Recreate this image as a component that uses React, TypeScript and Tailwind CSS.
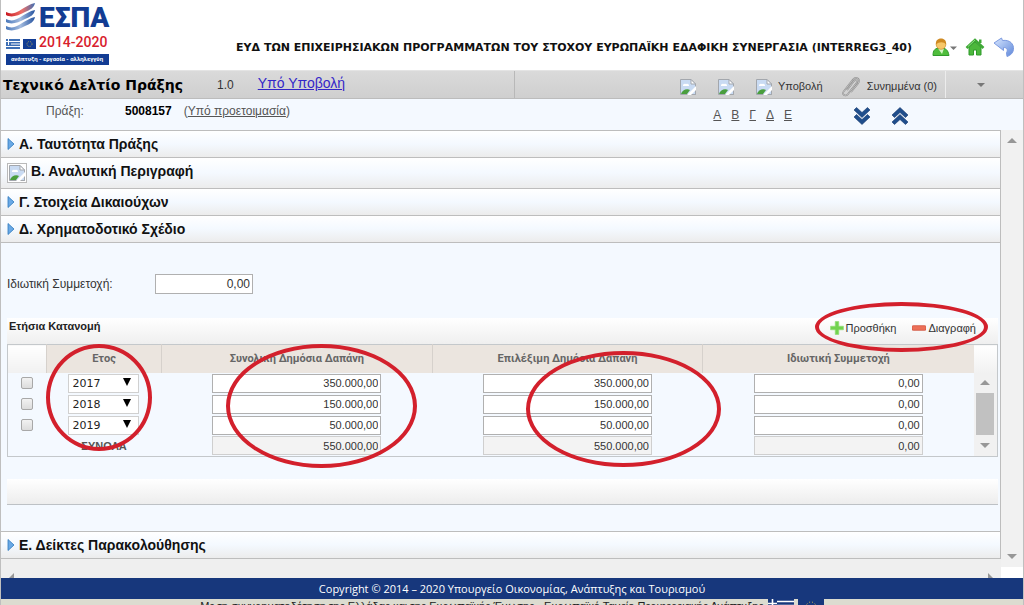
import React from "react";

const arial = "font-['Liberation_Sans',Arial,sans-serif]";

function Logo() {
  return (
    <svg width="106" height="66" viewBox="0 0 106 66" role="img" aria-label="ΕΣΠΑ 2014-2020" className="block shrink-0">
      <defs>
        <linearGradient id="wr" x1="0" x2="1"><stop offset="0" stopColor="#c81820" /><stop offset=".55" stopColor="#ee7068" /><stop offset="1" stopColor="#3f6fb4" /></linearGradient>
        <linearGradient id="wb" x1="0" x2="1"><stop offset="0" stopColor="#4a78bb" /><stop offset=".5" stopColor="#a4bcdf" /><stop offset="1" stopColor="#24529f" /></linearGradient>
      </defs>
      <path d="M1 12C5 14 9 14 14 11C20 7 25 4 30 3C29 8 25 10 20 12C13 16 6 18 1 15Z" fill="url(#wr)" />
      <path d="M1 19C5 21 9 21 14 18C20 14 25 11 30 10C29 15 25 17 20 19C13 23 6 25 1 22Z" fill="url(#wb)" />
      <path d="M1 26C5 28 9 28 14 25C20 21 25 18 30 17C29 22 25 24 20 26C13 30 6 32 1 29Z" fill="url(#wb)" />
      <text x="34" y="27" fontFamily="Roboto" fontWeight="900" fontSize="28" fill="#123c93">ΕΣΠΑ</text>
      <rect x="1" y="39" width="14" height="10" fill="#3f6fb4" />
      <path d="M6 41.500H15M6 44H15M1 46.500H15" stroke="#fff" />
      <path d="M3.500 39V45M1 41.500H6" stroke="#fff" />
      <rect x="18" y="39" width="13" height="10" fill="#123c93" />
      <circle cx="24.500" cy="44" r="2.500" fill="none" stroke="#b8ac5a" strokeWidth=".8" strokeDasharray="1 1" />
      <text x="34" y="47" fontFamily="Roboto" fontWeight="500" fontSize="14" fill="#d8202c">2014-2020</text>
      <rect x="1" y="54" width="103" height="11" fill="#123c93" />
      <text x="52" y="61" textAnchor="middle" fontFamily="Roboto" fontWeight="700" fontSize="6" fill="#fff">ανάπτυξη - εργασία - αλληλεγγύη</text>
    </svg>
  );
}

function BrokenImage({ boxed = false }: { boxed?: boolean }) {
  return (
    <svg width="20" height="20" viewBox="0 0 20 20" className="block shrink-0" aria-hidden="true">
      {boxed && <rect x=".5" y=".5" width="19" height="19" fill="#fff" stroke="#b9b9b9" />}
      <path d="M2.500 2.500H13L17.500 7V17.500H2.500Z" fill="#c9dbf3" stroke="#a3a7ad" />
      <path d="M13 2.500V7H17.500Z" fill="#fff" stroke="#a3a7ad" />
      <path d="M5 9a2 2 0 0 1 3-2a2 2 0 0 1 3 2Z" fill="#fff" />
      <path d="M3 17C4 13 9 11 12 13L9 17Z" fill="#4a9e3d" />
      <path d="M9 18L18 9V13L13 18Z" fill="#fff" />
      <path d="M14 17.500H17.500V14" fill="none" stroke="#a3a7ad" />
    </svg>
  );
}

function UserIcon() {
  return (
    <svg width="25" height="20" viewBox="0 0 25 20" className="block" aria-hidden="true">
      <path d="M1 18.500C1 13 3 11 8.500 11S16 13 17 18.500Z" fill="#4fbd3c" stroke="#2f9a2a" />
      <path d="M6 11.500L10 17L12 11.500Z" fill="#d3f5c4" />
      <circle cx="9" cy="7.500" r="4.800" fill="#f7c768" stroke="#c98a28" strokeWidth=".7" />
      <path d="M4 7.500C2.500 -.5 15.500 -.5 14 7.500C12 4.500 7 4.500 4 7.500Z" fill="#cf8a22" />
      <path d="M18 9.500H25L21.500 13Z" fill="#777" />
    </svg>
  );
}

function HomeIcon() {
  return (
    <svg width="20" height="18" viewBox="0 0 20 18" className="block" aria-hidden="true">
      <path d="M4 9V17H8.500V12H11.500V17H16V9L10 4Z" fill="#4cb83c" stroke="#2f9a2a" />
      <path d="M14 1.500H16.500V5H14Z" fill="#3fa836" />
      <path d="M1.500 10L10 2L18.500 10" fill="none" stroke="#3fa836" strokeWidth="2.600" />
      <path d="M3 8.500L10 2" stroke="#8be07f" strokeWidth="1" />
    </svg>
  );
}

function BackIcon() {
  return (
    <svg width="22" height="20" viewBox="0 0 22 20" className="block" aria-hidden="true">
      <defs><linearGradient id="bk" x1="0" y1="0" x2="1" y2="1"><stop offset="0" stopColor="#d7e6ff" /><stop offset="1" stopColor="#5f88da" /></linearGradient></defs>
      <path d="M1 6L8.500 1L9.500 3.500C17 2.500 21 7 20.500 12.500C20 16 17.500 18.500 14 19.500L13.500 16C15 13 14.500 10.500 10.500 10.500V13.500Z" fill="url(#bk)" stroke="#7d9be0" />
    </svg>
  );
}

function ClipIcon() {
  return (
    <svg width="20" height="22" viewBox="0 0 20 22" className="block" aria-hidden="true">
      <path d="M6 14L13 5C15 3 17 5 15.500 7L7 18C4 21.500 .500 18 3 15L12 3.500C15 0 20 3 17 7.500L10 16" fill="none" stroke="#8b8b8b" strokeWidth="1.600" />
      <path d="M6 14L13 5C15 3 17 5 15.500 7L7 18C4 21.500 .500 18 3 15L12 3.500C15 0 20 3 17 7.500L10 16" fill="none" stroke="#ddd" strokeWidth=".6" />
    </svg>
  );
}

function Chevrons({ up = false }: { up?: boolean }) {
  return (
    <svg width="18" height="20" viewBox="0 0 18 20" className={up ? "block rotate-180" : "block"} aria-hidden="true">
      <path d="M1 4L3.500 1.500L9 6.500L14.500 1.500L17 4L9 11.500ZM1 11L3.500 8.500L9 13.500L14.500 8.500L17 11L9 18.500Z" fill="#1f4e8c" stroke="#16386c" strokeWidth=".6" />
    </svg>
  );
}

function Tri({ up = false }: { up?: boolean }) {
  return (
    <svg width="10" height="5" viewBox="0 0 10 5" className={up ? "block rotate-180" : "block"} aria-hidden="true">
      <path d="M0 0H10L5 5Z" fill="#979797" />
    </svg>
  );
}

function Section({ title, broken = false }: { title: string; broken?: boolean }) {
  return (
    <button type="button" className={`flex w-full shrink-0 items-center gap-1 border-t border-[#bdbdbd] bg-linear-to-b from-white via-[#f4f9ff] to-[#ececec] px-1.5 text-left text-sm font-bold leading-5 text-[#111] ${broken ? "h-[31px] pb-1" : "h-[27px]"}`}>
      {broken ? <span className="pt-1"><BrokenImage boxed /></span> : (
        <svg width="8" height="12" viewBox="0 0 8 12" className="block" aria-hidden="true">
          <path d="M1 .500L7 6L1 11.500Z" fill="#6aa9e6" stroke="#2d78bd" strokeWidth=".8" />
        </svg>
      )}
      <span>{title}</span>
    </button>
  );
}

const headers = ["Συνολική Δημόσια Δαπάνη", "Επιλέξιμη Δημόσια Δαπάνη", "Ιδιωτική Συμμετοχή"];
const rows = [
  { year: "2017", values: ["350.000,00", "350.000,00", "0,00"] },
  { year: "2018", values: ["150.000,00", "150.000,00", "0,00"] },
  { year: "2019", values: ["50.000,00", "50.000,00", "0,00"] },
];
const totals = ["550.000,00", "550.000,00", "0,00"];

function Amount({ value, label, total = false }: { value: string; label: string; total?: boolean }) {
  return (
    <input aria-label={label} defaultValue={value} readOnly={total} className={`mx-auto block h-[19px] w-[169px] border px-0.5 text-right text-[11px] text-[#333] ${total ? "border-[#cfcfcf] bg-[#f3f3f3]" : "border-[#b0b0b0] bg-white"}`} />
  );
}

function DistributionTable() {
  return (
    <table className="w-full table-fixed border-collapse border border-[#c4c8cb]">
      <colgroup>
        <col className="w-[39px]" /><col className="w-[115px]" /><col /><col /><col /><col className="w-6" />
      </colgroup>
      <thead>
        <tr className="h-7 bg-[#ebe5df] font-[Roboto,sans-serif] text-[11px] text-[#666]">
          <th aria-label="Επιλογή" className="bg-linear-to-b from-white to-[#f1f1f1]" />
          <th className="border-l border-[#d6d1cc] p-0">Ετος</th>
          {headers.map((h) => <th key={h} className="border-l border-[#d6d1cc] p-0">{h}</th>)}
          <th className="bg-linear-to-b from-white to-[#f1f1f1]" />
        </tr>
      </thead>
      <tbody>
        {rows.map((r, i) => (
          <tr key={r.year} className="h-[21px]">
            <td className="p-0 text-center">
              <input type="checkbox" aria-label={`Επιλογή ${r.year}`} className="mx-auto block size-3 appearance-none rounded-xs border border-[#a8a8a8] bg-linear-to-b from-[#f2f2f2] to-[#dcdcdc]" />
            </td>
            <td className="p-0 pl-[21px]">
              <div className="relative w-[71px]">
                <select aria-label="Ετος" defaultValue={r.year} className="block h-[19px] w-full appearance-none border border-[#d0d0d0] bg-white px-1 pt-px font-['DejaVu_Sans',Verdana,sans-serif] text-[11px] leading-4 text-[#222]">
                  <option>2017</option><option>2018</option><option>2019</option>
                </select>
                <svg width="8" height="8" viewBox="0 0 8 8" className="pointer-events-none absolute right-2 top-1" aria-hidden="true"><path d="M0 0H8L4 8Z" fill="#000" /></svg>
              </div>
            </td>
            {r.values.map((v, j) => <td key={j} className="p-0"><Amount value={v} label={`${headers[j]} ${r.year}`} /></td>)}
            {i === 0 && (
              <td rowSpan={4} className="bg-[#f1f1f1] p-0">
                <div className="flex flex-col items-center gap-2">
                  <Tri up />
                  <div className="h-[42px] w-[18px] bg-[#c1c1c1]" />
                  <Tri />
                </div>
              </td>
            )}
          </tr>
        ))}
        <tr className="h-[21px]">
          <td />
          <td className="p-0 text-center text-[11px] font-bold leading-4 text-[#555]">ΣΥΝΟΛΑ</td>
          {totals.map((v, j) => <td key={j} className="p-0"><Amount value={v} label={`${headers[j]} σύνολο`} total /></td>)}
        </tr>
      </tbody>
    </table>
  );
}

function FinancePlan() {
  return (
    <div className="border-t border-[#bdbdbd] bg-[#f4f9ff] pl-1.5 pr-0.5">
      <label className="flex h-[75px] items-center pt-1.5 text-xs text-[#333]">
        <span className="w-[148px]">Ιδιωτική Συμμετοχή:</span>
        <input defaultValue="0,00" className="h-5 w-[98px] border border-[#b0b0b0] bg-white px-0.5 text-right text-xs text-[#333]" />
      </label>
      <div className="relative">
        <div className="flex h-[26px] items-start justify-between bg-linear-to-b from-white to-[#efefef] pl-0.5 text-[11px] leading-4 text-[#333]">
          <h2 className="font-bold text-[#222]">Ετήσια Κατανομή</h2>
          <div className="flex gap-4 pr-[22px] pt-0.5">
            <button type="button" className="flex items-center gap-0.5">
              <svg width="14" height="14" viewBox="0 0 12 12" aria-hidden="true"><path d="M4.500 .500H7.500V4.500H11.500V7.500H7.500V11.500H4.500V7.500H.500V4.500H4.500Z" fill="#72d34e" stroke="#8fdc74" strokeWidth=".6" /></svg>
              Προσθήκη
            </button>
            <button type="button" className="flex items-center gap-0.5">
              <svg width="14" height="14" viewBox="0 0 12 12" aria-hidden="true"><rect y="4" width="12" height="4" rx="1" fill="#ec7058" stroke="#cf4a35" strokeWidth=".6" /></svg>
              Διαγραφή
            </button>
          </div>
        </div>
        <DistributionTable />
        <div className="pointer-events-none absolute left-[39px] top-[26px] h-[107px] w-[106px] rounded-[50%] border-4 border-[#d3202c]" />
        <div className="pointer-events-none absolute left-[219px] top-[26px] h-[124px] w-[191px] rounded-[50%] border-4 border-[#d3202c]" />
        <div className="pointer-events-none absolute left-[519px] top-[33px] h-[116px] w-[195px] rounded-[50%] border-4 border-[#d3202c]" />
        <div className="pointer-events-none absolute -top-4 right-2.5 h-[50px] w-[173px] rounded-[50%] border-4 border-[#d3202c]" />
      </div>
      <div className="mt-[22px] h-[26px] border-b border-[#bdc1c5] bg-linear-to-b from-white to-[#ededed]" />
      <div className="h-[26px]" />
    </div>
  );
}

export default function App() {
  return (
    <div className={`flex h-screen flex-col overflow-hidden border-x border-[#bfbfbf] bg-white ${arial}`}>
      <header className="flex h-[70px] shrink-0 pl-1">
        <Logo />
        <h1 className="ml-auto mr-5 whitespace-nowrap pt-10 font-['DejaVu_Sans',Verdana,sans-serif] text-[11px] font-bold leading-4 text-[#111]">ΕΥΔ ΤΩΝ ΕΠΙΧΕΙΡΗΣΙΑΚΩΝ ΠΡΟΓΡΑΜΜΑΤΩΝ ΤΟΥ ΣΤΟΧΟΥ ΕΥΡΩΠΑΪΚΗ ΕΔΑΦΙΚΗ ΣΥΝΕΡΓΑΣΙΑ (INTERREG3_40)</h1>
        <nav className="flex items-center gap-2 pr-2 pt-6">
          <button type="button" aria-label="Χρήστης"><UserIcon /></button>
          <button type="button" aria-label="Αρχική"><HomeIcon /></button>
          <button type="button" aria-label="Επιστροφή"><BackIcon /></button>
        </nav>
      </header>

      <div className="flex h-[29px] shrink-0 items-stretch border-y border-t-[#e4e4e4] border-b-[#bcbcbc] bg-linear-to-b from-[#dadada] to-[#cfcfcf]">
        <div className="flex flex-1 items-center pl-0.5">
          <h2 className="whitespace-nowrap font-['DejaVu_Sans',Verdana,sans-serif] text-sm font-bold leading-5 text-black">Τεχνικό Δελτίο Πράξης</h2>
          <span className="ml-[34px] text-xs text-[#333]">1.0</span>
          <a href="#submit" className="ml-6 pb-1 text-sm leading-5 text-[#3326c8] underline">Υπό Υποβολή</a>
        </div>
        <div className="flex w-[431px] items-center justify-end border-l border-[#b8b8b8] pr-2 pt-1 text-[11px] text-[#333]">
          <button type="button" aria-label="Αποθήκευση" className="mr-[18px]"><BrokenImage /></button>
          <button type="button" aria-label="Εκτύπωση" className="mr-[18px]"><BrokenImage /></button>
          <button type="button" className="mr-[18px] flex items-center gap-1"><BrokenImage />Υποβολή</button>
          <button type="button" className="flex items-center gap-1.5"><ClipIcon />Συνημμένα (0)</button>
        </div>
        <button type="button" aria-label="Περισσότερα" className="flex w-[78px] items-center justify-center border-l border-[#ececec] pr-2">
          <svg width="8" height="4" viewBox="0 0 8 4" aria-hidden="true"><path d="M0 0H8L4 4Z" fill="#777" /></svg>
        </button>
      </div>

      <div className="flex h-[31px] shrink-0 items-center bg-[#f4f9ff] pb-2 pl-[45px] text-xs text-[#555]">
        <span className="w-[79px]">Πράξη:</span>
        <strong className="mr-3 text-black">5008157</strong>
        <span>(<a href="#status" className="underline">Υπό προετοιμασία</a>)</span>
        <nav className="ml-auto mr-[61px] flex gap-2.5 pt-2">
          {["Α", "Β", "Γ", "Δ", "Ε"].map((l) => <a key={l} href={`#${l}`} className="underline">{l}</a>)}
        </nav>
        <div className="mr-[114px] flex gap-5 pt-2.5">
          <button type="button" aria-label="Ανάπτυξη όλων"><Chevrons /></button>
          <button type="button" aria-label="Σύμπτυξη όλων"><Chevrons up /></button>
        </div>
      </div>

      <div className="flex min-h-0 flex-1 bg-[#efefef]">
        <div className="flex min-w-0 flex-1 flex-col">
          <main className="border-b border-r border-[#bdbdbd]">
            <Section title="Α. Ταυτότητα Πράξης" />
            <Section title="Β. Αναλυτική Περιγραφή" broken />
            <Section title="Γ. Στοιχεία Δικαιούχων" />
            <Section title="Δ. Χρηματοδοτικό Σχέδιο" />
            <FinancePlan />
            <Section title="Ε. Δείκτες Παρακολούθησης" />
          </main>
          <div className="mt-auto flex justify-between px-2">
            <svg width="5" height="5" viewBox="0 0 5 5" aria-hidden="true"><path d="M5 0V5H0Z" fill="#979797" /></svg>
            <svg width="5" height="5" viewBox="0 0 5 5" aria-hidden="true"><path d="M0 0V5H5Z" fill="#979797" /></svg>
          </div>
        </div>
        <div className="flex w-[22px] flex-col">
          <div className="flex flex-1 flex-col items-center justify-between bg-[#f1f1f1] py-2">
            <Tri up />
            <Tri />
          </div>
          <div className="h-[11px] bg-white" />
        </div>
      </div>

      <footer className="shrink-0">
        <p className="flex h-[21px] items-center justify-center bg-[#17377c] font-['Open_Sans',sans-serif] text-[11px] font-medium leading-4 text-white">Copyright © 2014 – 2020 Υπουργείο Οικονομίας, Ανάπτυξης και Τουρισμού</p>
        <div className="flex h-1.5 items-start justify-center gap-1 overflow-hidden bg-[#dcdcd0] text-[11px] leading-[14px] text-[#222]">
          <span>Με τη συγχρηματοδότηση της Ελλάδας και της Ευρωπαϊκής Ένωσης - Ευρωπαϊκό Ταμείο Περιφερειακής Ανάπτυξης</span>
          <svg width="26" height="17" viewBox="0 0 26 17" className="block shrink-0" aria-hidden="true"><rect width="26" height="17" fill="#17377c" /><path d="M4.500 0V9M0 4.500H9M9 2.500H26M9 6.500H26" stroke="#fff" strokeWidth="1.600" /></svg>
          <svg width="26" height="17" viewBox="0 0 26 17" className="block shrink-0" aria-hidden="true"><rect width="26" height="17" fill="#17377c" /><circle cx="13" cy="8" r="5" fill="none" stroke="#d8c24a" strokeDasharray="1 2" /></svg>
        </div>
      </footer>
    </div>
  );
}
